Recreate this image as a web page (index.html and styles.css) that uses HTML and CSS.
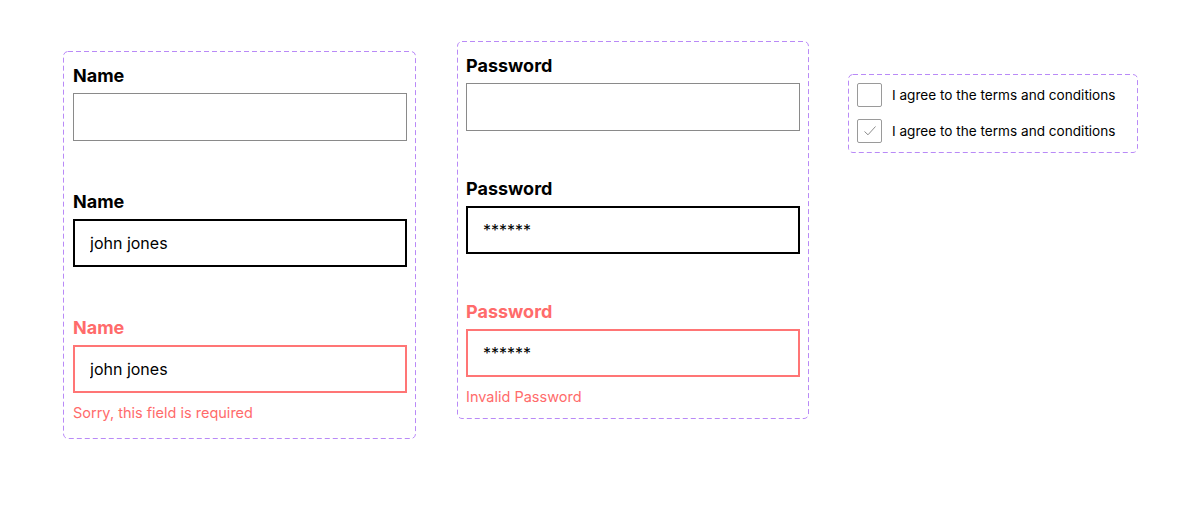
FILE: index.html
```html
<!DOCTYPE html>
<html lang="en">
<head>
  <meta charset="UTF-8">
  <meta name="viewport" content="width=device-width, initial-scale=1.0">
  <title>Form Fields</title>
  <link rel="stylesheet" href="styles.css">
</head>
<body>
  <div class="board">
    <!-- Text field: default / filled / error -->
    <div class="set set-name">
      <svg class="set-outline"><rect></rect></svg>
      <div class="field">
        <label class="field-label" for="name1">Name</label>
        <input class="field-input" type="text" id="name1">
      </div>
      <div class="field">
        <label class="field-label" for="name2">Name</label>
        <input class="field-input filled" type="text" id="name2" value="john jones">
      </div>
      <div class="field error">
        <label class="field-label" for="name3">Name</label>
        <input class="field-input" type="text" id="name3" value="john jones">
        <div class="field-msg">Sorry, this field is required</div>
      </div>
    </div>

    <!-- Password field: default / filled / error -->
    <div class="set set-password">
      <svg class="set-outline"><rect></rect></svg>
      <div class="field">
        <label class="field-label" for="pass1">Password</label>
        <input class="field-input" type="text" id="pass1">
      </div>
      <div class="field">
        <label class="field-label" for="pass2">Password</label>
        <input class="field-input filled" type="text" id="pass2" value="******">
      </div>
      <div class="field error">
        <label class="field-label" for="pass3">Password</label>
        <input class="field-input" type="text" id="pass3" value="******">
        <div class="field-msg">Invalid Password</div>
      </div>
    </div>

    <!-- Checkbox: unchecked / checked -->
    <div class="set set-check">
      <svg class="set-outline"><rect></rect></svg>
      <label class="check">
        <span class="check-box"></span>
        <span class="check-text">I agree to the terms and conditions</span>
      </label>
      <label class="check">
        <span class="check-box">
          <svg width="14" height="12" viewBox="0 0 14 12">
            <path d="M1.5 6.5 L5 9.8 L12.5 1.5" fill="none" stroke="#8c8c8c" stroke-width="1"/>
          </svg>
        </span>
        <span class="check-text">I agree to the terms and conditions</span>
      </label>
    </div>
  </div>
</body>
</html>
```

FILE: styles.css
```css
body {
  margin: 0;
  padding: 0;
  background: #fff;
  color: #000;
  font-family: Inter, "Noto Sans", Arial, sans-serif;
}
.board {
  display: flex;
  align-items: flex-start;
  padding-left: 63px;
}

/* component set frame with a dashed outline drawn on top */
.set {
  position: relative;
  box-sizing: border-box;
}
.set-outline {
  position: absolute;
  top: 0;
  left: 0;
  width: 100%;
  height: 100%;
  pointer-events: none;
}
.set-outline rect {
  x: 0.5px;
  y: 0.5px;
  width: calc(100% - 1px);
  height: calc(100% - 1px);
  rx: 4.5px;
  fill: none;
  stroke: #b98af7;
  stroke-width: 1;
  stroke-dasharray: 5 3;
}
.set-name {
  width: 353px;
  margin-top: 51px;
  padding: 14px 9px 17px 10px;
  display: flex;
  flex-direction: column;
  gap: 50px;
}
.set-password {
  width: 352px;
  margin-top: 41px;
  margin-left: 41px;
  padding: 14px 9px 13px;
  display: flex;
  flex-direction: column;
  gap: 47px;
}
.set-check {
  width: 290px;
  margin-top: 74px;
  margin-left: 39px;
  padding: 9px 9px 10px;
  display: flex;
  flex-direction: column;
  gap: 12px;
}

.field {
  display: flex;
  flex-direction: column;
}
.field-label {
  font-size: 18px;
  line-height: 22px;
  font-weight: 700;
  margin-bottom: 6px;
}
.field-input {
  height: 48px;
  box-sizing: border-box;
  border: 1px solid #8a8a8a;
  padding: 0 15px;
  font-family: inherit;
  font-size: 16px;
  color: #000;
  background: #fff;
  outline: none;
}
.field-input.filled {
  border: 2px solid #000;
}
.error .field-label {
  color: #ff6b6b;
}
.error .field-input {
  border: 2px solid #ff7575;
}
.field-msg {
  margin-top: 11px;
  font-size: 14.5px;
  line-height: 18px;
  color: #ff6b6b;
}

.check {
  display: flex;
  align-items: center;
  gap: 10px;
}
.check-box {
  width: 25px;
  height: 24px;
  box-sizing: border-box;
  border: 1.5px solid #9a9a9a;
  border-radius: 2px;
  display: flex;
  align-items: center;
  justify-content: center;
}
.check-text {
  font-size: 13.6px;
  line-height: 17px;
}
```
